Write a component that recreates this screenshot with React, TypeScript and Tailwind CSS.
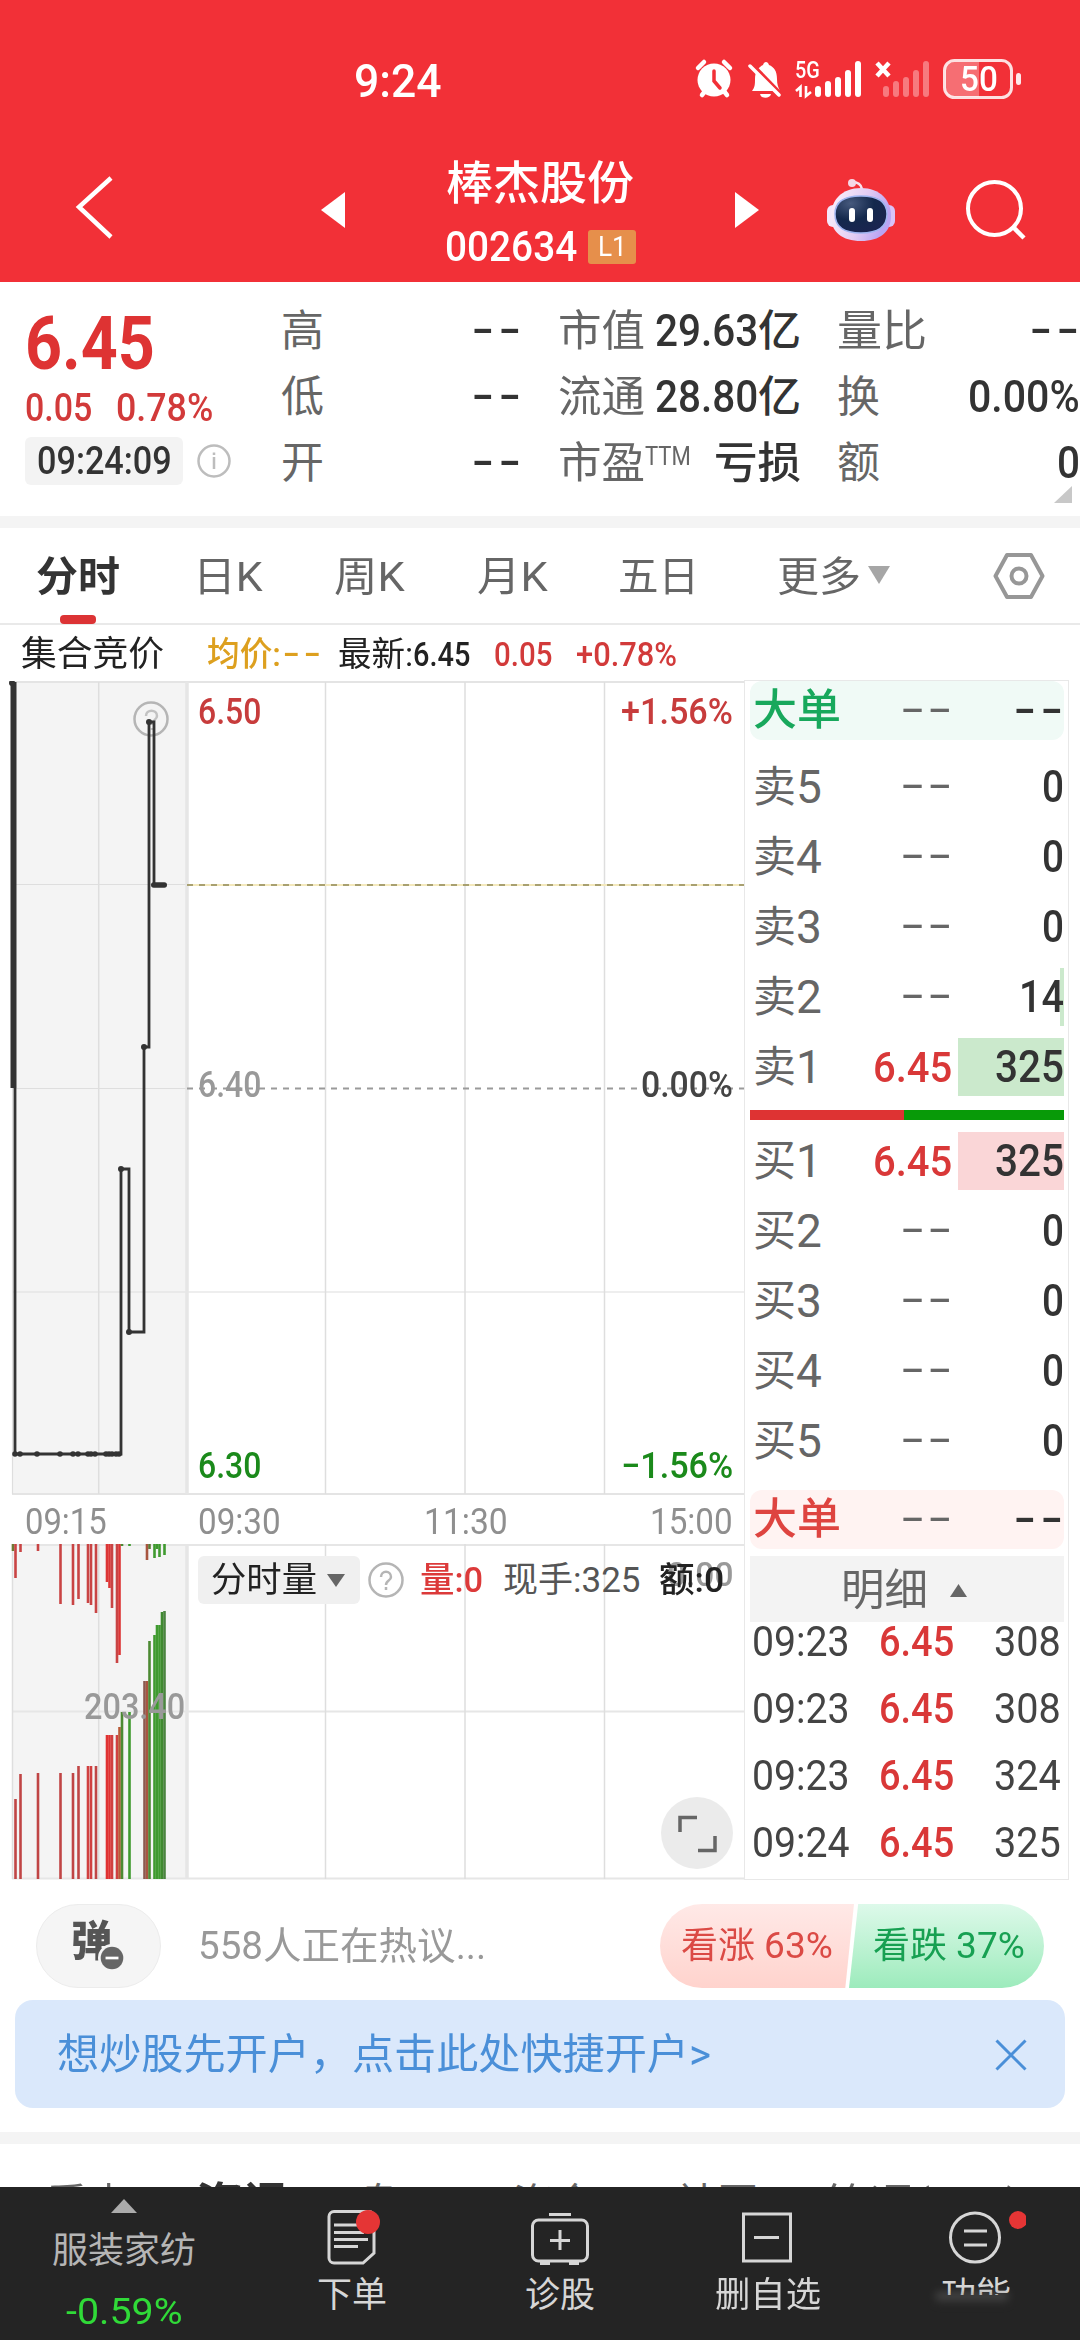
import { useLayoutEffect, useRef, type ReactNode } from "react";

/** Condensed label: the text is squeezed or stretched to the width its class sets. */
function Fit({ className = "", children }: { className?: string; children: ReactNode }) {
  const outer = useRef<HTMLSpanElement>(null);
  const inner = useRef<HTMLSpanElement>(null);
  useLayoutEffect(() => {
    const apply = () => {
      if (!outer.current || !inner.current) return;
      const natural = inner.current.offsetWidth;
      if (natural > 0) inner.current.style.transform = `scaleX(${outer.current.clientWidth / natural})`;
    };
    apply();
    document.fonts?.ready.then(apply);
  }, []);
  return (
    <span ref={outer} className={`block shrink-0 leading-none ${className}`}>
      <span ref={inner} className="inline-block origin-left whitespace-nowrap leading-none">
        {children}
      </span>
    </span>
  );
}

function Dashes({ className = "" }: { className?: string }) {
  return <Fit className={`w-[54px] text-[44px] font-medium tracking-[3.5px] ${className}`}>--</Fit>;
}

function StatusIcons() {
  return (
    <svg className="block" width="340" height="44" viewBox="688 57 340 44" fill="none">
      <circle cx="714" cy="80" r="16.5" fill="#fff" />
      <path d="M698 68l6-6M730 68l-6-6M702 95l4-5M727 95l-4-5" stroke="#fff" strokeWidth="4.5" strokeLinecap="round" />
      <path d="M714 71v10l6 7" stroke="#F23037" strokeWidth="3.5" strokeLinecap="round" />
      <path d="M752 91c3-4 3-7 3-12 0-8 4-12 8-14 1-4 5-4 6 0 5 2 8 6 8 14 0 5 1 8 3 12z" fill="#fff" />
      <path d="M760 94h11c-1 5-10 5-11 0z" fill="#fff" />
      <path d="M753 65l31 32" stroke="#F23037" strokeWidth="3.5" />
      <path d="M750 66l29 29" stroke="#fff" strokeWidth="3.5" strokeLinecap="round" />
      <path d="M796 91l4.500-4v10M806 86v10l5-4" stroke="#fff" strokeWidth="2.600" />
      <g fill="#fff">
        <rect x="815" y="86" width="6" height="11" rx="3" />
        <rect x="825" y="81" width="6" height="16" rx="3" />
        <rect x="835" y="77" width="6" height="20" rx="3" />
        <rect x="845" y="70" width="6" height="27" rx="3" />
        <rect x="855" y="61" width="6" height="36" rx="3" />
      </g>
      <path d="M877 63l12 13M889 63l-12 13" stroke="#fff" strokeWidth="4.500" />
      <g fill="#fff" fillOpacity=".36">
        <rect x="883" y="86" width="6" height="11" rx="3" />
        <rect x="893" y="81" width="6" height="16" rx="3" />
        <rect x="903" y="77" width="6" height="20" rx="3" />
        <rect x="913" y="70" width="6" height="27" rx="3" />
        <rect x="923" y="61" width="6" height="36" rx="3" />
      </g>
      <path d="M979 62v35h-25c-6 0-9-3-9-9V71c0-6 3-9 9-9z" fill="#fff" fillOpacity=".3" />
      <rect x="944.500" y="60.500" width="67" height="37" rx="10" stroke="#fff" strokeOpacity=".85" strokeWidth="3" />
      <rect x="1016" y="73" width="5" height="12" rx="2.500" fill="#fff" fillOpacity=".9" />
    </svg>
  );
}

function Robot() {
  return (
    <svg className="block" width="70" height="66" viewBox="0 0 70 66">
      <defs>
        <linearGradient id="shell" x1="0" y1="0" x2="1" y2=".3">
          <stop offset="0" stopColor="#fdf3fb" />
          <stop offset=".6" stopColor="#e3ccf3" />
          <stop offset="1" stopColor="#b9a4f3" />
        </linearGradient>
        <radialGradient id="visor" cx=".3" cy=".2" r=".9">
          <stop offset="0" stopColor="#46597d" />
          <stop offset=".5" stopColor="#14284c" />
          <stop offset="1" stopColor="#1b2350" />
        </radialGradient>
      </defs>
      <path d="M26 5c6 0 9 2 10 7" stroke="#f8e3ee" strokeWidth="2.500" fill="none" />
      <circle cx="26" cy="6" r="4" fill="#f5d7e6" />
      <rect x="1" y="28" width="12" height="22" rx="6" fill="#f4e6fa" />
      <rect x="57" y="28" width="12" height="22" rx="6" fill="#d9c2f8" />
      <path d="M35 11C54 11 65 23 65 39S54 64 35 64 5 55 5 39s11-28 30-28z" fill="url(#shell)" />
      <path d="M35 19C53 19 61 25 61 37S53 56 35 56 9 49 9 37s8-18 26-18z" fill="url(#visor)" stroke="#9fb4f0" strokeWidth="1.500" />
      <rect x="23" y="31" width="6" height="14" rx="3" fill="#fff" />
      <rect x="41" y="31" width="6" height="14" rx="3" fill="#fff" />
    </svg>
  );
}

function Header() {
  return (
    <header className="h-[282px] shrink-0 bg-[#F23037] text-white">
      <div className="flex h-[158px] items-start pt-[57px]">
        <Fit className="ml-[354px] w-[88px] text-[47px] font-medium">9:24</Fit>
        <div className="relative ml-[246px]">
          <StatusIcons />
          <Fit className="absolute left-[107px] top-[2px] w-[25px] text-[23px] font-medium">5G</Fit>
          <Fit className="absolute left-[272px] top-[5px] w-[38px] text-[35px] font-medium">50</Fit>
        </div>
      </div>
      <div className="flex">
        <svg className="ml-[72px] mt-[16px]" width="44" height="68" viewBox="0 0 44 68" fill="none" stroke="#fff" strokeWidth="4.500">
          <path d="M39 4L7 33l32 30" />
        </svg>
        <svg className="ml-[205px] mt-[34px]" width="24" height="36" viewBox="0 0 24 36" fill="#fff">
          <path d="M24 0v36L0 18z" />
        </svg>
        <div className="ml-[101px] w-[192px] pt-[2px]">
          <Fit className="w-[188px] text-[46px] font-medium">棒杰股份</Fit>
          <div className="mt-[20px] flex items-center">
            <Fit className="-ml-px w-[132px] text-[42px] font-medium">002634</Fit>
            <span className="ml-[11px] flex h-[34px] w-[48px] items-center justify-center rounded-[3px] bg-[#E68F4B]">
              <Fit className="w-[29px] text-[28px]">L1</Fit>
            </span>
          </div>
        </div>
        <svg className="ml-[97px] mt-[34px]" width="24" height="36" viewBox="0 0 24 36" fill="#fff">
          <path d="M0 0l24 18L0 36z" />
        </svg>
        <div className="ml-[67px] mt-[19px]">
          <Robot />
        </div>
        <svg className="ml-[69px] mt-[20px]" width="64" height="64" viewBox="0 0 64 64" fill="none" stroke="#fff" strokeWidth="4">
          <circle cx="29.500" cy="30.500" r="26.500" />
          <path d="M48 49l11 11" strokeWidth="4.500" />
        </svg>
      </div>
    </header>
  );
}

function Summary() {
  return (
    <section className="relative flex h-[234px] shrink-0 bg-white text-[#333]">
      <div className="w-[281px] pl-[25px]">
        <Fit className="mt-[24px] w-[130px] text-[75px] font-bold text-[#DE3333]">6.45</Fit>
        <div className="mt-[8px] flex font-medium text-[#D23A3A]">
          <Fit className="w-[67px] text-[38px]">0.05</Fit>
          <Fit className="ml-[24px] w-[97px] text-[38px]">0.78%</Fit>
        </div>
        <div className="mt-[10px] flex items-center">
          <span className="flex h-[48px] w-[158px] items-center rounded-[6px] bg-[#F3F3F3] pl-[12px]">
            <Fit className="w-[135px] text-[38px] font-medium">09:24:09</Fit>
          </span>
          <svg className="ml-[14px]" width="34" height="34" viewBox="0 0 34 34" fill="none" stroke="#bdbdbd" strokeWidth="2.500">
            <circle cx="17" cy="17" r="15.500" />
            <path d="M17 13v12M17 8.500v2.500" />
          </svg>
        </div>
      </div>
      <div className="w-[245px] pt-[16px]">
        {["高", "低", "开"].map((label) => (
          <div key={label} className="flex h-[66px] items-center justify-between">
            <Fit className="w-[43px] text-[43px] text-[#666]">{label}</Fit>
            <Dashes className="pb-1" />
          </div>
        ))}
      </div>
      <div className="ml-[32px] w-[243px] pt-[16px]">
        {[
          ["市值", "29.63"],
          ["流通", "28.80"],
        ].map(([label, value]) => (
          <div key={label} className="flex h-[66px] items-center">
            <Fit className="w-[87px] text-[43px] text-[#666]">{label}</Fit>
            <Fit className="ml-[10px] w-[103px] text-[44px] font-medium">{value}</Fit>
            <Fit className="w-[43px] text-[43px] font-medium">亿</Fit>
          </div>
        ))}
        <div className="flex h-[66px] items-center">
          <Fit className="w-[87px] text-[43px] text-[#666]">市盈</Fit>
          <Fit className="mb-[14px] w-[46px] text-[25px] text-[#666]">TTM</Fit>
          <Fit className="ml-[23px] w-[87px] text-[43px] font-medium">亏损</Fit>
        </div>
      </div>
      <div className="ml-[36px] w-[243px] pt-[16px]">
        <div className="flex h-[66px] items-center justify-between">
          <Fit className="w-[90px] text-[43px] text-[#666]">量比</Fit>
          <Dashes className="-mr-[4px] pb-1" />
        </div>
        <div className="flex h-[66px] items-center justify-between">
          <Fit className="w-[43px] text-[43px] text-[#666]">换</Fit>
          <Fit className="w-[112px] text-[44px] font-medium">0.00%</Fit>
        </div>
        <div className="flex h-[66px] items-center justify-between">
          <Fit className="w-[43px] text-[43px] text-[#666]">额</Fit>
          <Fit className="w-[23px] text-[44px] font-medium">0</Fit>
        </div>
      </div>
      <svg className="absolute right-[8px] top-[204px]" width="18" height="17" viewBox="0 0 18 17" fill="#c8c8c8">
        <path d="M18 0v17H0z" />
      </svg>
    </section>
  );
}

function PeriodTabs() {
  return (
    <nav className="flex h-[97px] shrink-0 border-b-2 border-[#E9E9E9] bg-white pt-[29px] text-[41px] text-[#666]">
      <div className="ml-[36px] w-[84px]">
        <Fit className="w-[84px] font-bold text-[#333]">分时</Fit>
        <div className="ml-[24px] mt-[17px] h-[9px] w-[36px] rounded-[4px] bg-[#DC3335]" />
      </div>
      <Fit className="ml-[73px] w-[70px]">日K</Fit>
      <Fit className="ml-[71px] w-[71px]">周K</Fit>
      <Fit className="ml-[72px] w-[71px]">月K</Fit>
      <Fit className="ml-[70px] w-[81px]">五日</Fit>
      <Fit className="ml-[78px] w-[84px]">更多</Fit>
      <svg className="ml-[7px] mt-[9px]" width="22" height="18" viewBox="0 0 22 18" fill="#a6a6a6">
        <path d="M0 0h22L11 18z" />
      </svg>
      <svg className="ml-[103px] mt-[-6px]" width="52" height="50" viewBox="0 0 52 50" fill="none" stroke="#979797" strokeWidth="4" strokeLinejoin="round">
        <path d="M14 4h24l11.500 21L38 46H14L2.500 25z" />
        <circle cx="26" cy="25" r="7.500" />
      </svg>
    </nav>
  );
}

function QuoteLine() {
  return (
    <div className="flex h-[56px] w-[744px] items-center pt-[2px] text-[34px] font-medium">
      <Fit className="ml-[21px] w-[143px] text-[35px] font-normal text-[#222]">集合竞价</Fit>
      <Fit className="ml-[43px] w-[74px] text-[#DDA01F]">均价:</Fit>
      <Fit className="ml-[2px] w-[42px] pb-[3px] tracking-[3px] text-[#DDA01F]">--</Fit>
      <Fit className="ml-[13px] w-[75px] font-normal text-[#222]">最新:</Fit>
      <Fit className="ml-0 w-[57px] text-[33px] text-[#222]">6.45</Fit>
      <Fit className="ml-[24px] w-[58px] text-[33px] text-[#D23A3A]">0.05</Fit>
      <Fit className="ml-[24px] w-[101px] text-[33px] text-[#D23A3A]">+0.78%</Fit>
    </div>
  );
}

const trades = [15, 20, 37, 60, 73, 78, 88, 91, 95, 106, 109, 112, 116, 119];

function PriceChart() {
  return (
    <div className="relative h-[814px]">
      <svg className="block" width="744" height="814" viewBox="0 681 744 814" fill="none">
        <rect x="12" y="682" width="174" height="812" fill="#F4F4F4" />
        <path d="M12 682H744M12 1494H744" stroke="#E4E4E4" strokeWidth="2" />
        <path d="M12 884.500H186M12 1088.500H186M12 1292H744M12.500 682V1494" stroke="#DEDEDE" strokeWidth="1.200" />
        <path d="M98.700 682V1494M325.500 682V1494M465 682V1494M604.500 682V1494" stroke="#DEDEDE" strokeWidth="1.500" />
        <path d="M187 682V1494" stroke="#E6E6E6" strokeWidth="3.500" />
        <path d="M187 885H744" stroke="#F4E9BD" strokeWidth="2" />
        <path d="M187 885H744" stroke="#A8A070" strokeWidth="2" strokeDasharray="6 6" />
        <path d="M187 1088.500H744" stroke="#9a9a9a" strokeWidth="2" strokeDasharray="6 6" />
        <circle cx="151" cy="719" r="16.500" stroke="#b5b5b5" strokeWidth="2.500" />
        <path d="M146 716c0-7 11-7 11 0 0 4-5 4-5 9M152 728v2" stroke="#c2c2c2" strokeWidth="2.500" />
        <path d="M13.500 682V1088" stroke="#333" strokeWidth="6" />
        <path d="M15 1088V1454H121V1169H129V1332H144V1047H149V722H154V885H166" stroke="#333" strokeWidth="2.800" />
        <g fill="#333">
          {trades.map((x) => (
            <circle key={x} cx={x} cy="1454" r="2.800" />
          ))}
          <circle cx="12" cy="683" r="3" />
          <circle cx="121" cy="1169" r="3" />
          <circle cx="129" cy="1332" r="3" />
          <circle cx="144" cy="1047" r="3" />
          <circle cx="149" cy="722" r="3" />
          <rect x="151" y="882.300" width="16" height="5.400" rx="2.700" />
        </g>
      </svg>
      <div className="absolute inset-y-0 left-[198px] right-[11px] flex flex-col pt-[13px] text-[36px] font-medium">
        <div className="flex justify-between text-[#C73C3C]">
          <Fit className="w-[63px]">6.50</Fit>
          <Fit className="w-[112px]">+1.56%</Fit>
        </div>
        <div className="mt-[337px] flex justify-between text-[#999]">
          <Fit className="w-[63px]">6.40</Fit>
          <Fit className="w-[92px] text-[#444]">0.00%</Fit>
        </div>
        <div className="mt-[345px] flex justify-between text-[#1B8A1B]">
          <Fit className="w-[63px]">6.30</Fit>
          <Fit className="w-[112px]">−1.56%</Fit>
        </div>
      </div>
    </div>
  );
}

const upperBars: [number, number, string][] = [
  [13, 1551, "#6f7a35"], [15.500, 1578, "#C94444"], [20.500, 1552, "#C94444"], [38, 1551, "#C94444"], [60.500, 1604, "#C94444"],
  [73, 1605, "#C94444"], [78.500, 1599, "#C94444"], [88, 1603, "#C94444"], [91, 1605, "#C94444"], [96, 1613, "#C94444"],
  [107, 1582, "#DC3535"], [109.500, 1588, "#DC3535"], [112, 1608, "#C94444"], [117, 1663, "#C94444"], [119.500, 1655, "#DC3535"],
  [122, 1546, "#4c8a33"], [129.500, 1546, "#3f9a2f"], [147, 1560, "#A85540"], [149.500, 1549, "#5c7a35"], [154.500, 1558, "#3f9a2f"],
  [157, 1549, "#3f9a2f"], [159.500, 1557, "#3f9a2f"], [164.500, 1555, "#3f9a2f"],
];

const lowerBars: [number, number, string][] = [
  [15.500, 1799, "#C04545"], [20.500, 1774, "#C04545"], [38, 1773, "#C04545"], [60.500, 1773, "#C04545"], [73, 1773, "#C04545"],
  [78.500, 1766, "#C04545"], [88, 1766, "#D04040"], [91, 1766, "#D04040"], [96, 1766, "#C04545"], [107, 1735, "#E03232"],
  [109.500, 1735, "#E03232"], [112, 1735, "#D04040"], [117, 1735, "#D04040"], [119.500, 1727, "#B85A38"], [122, 1712, "#4c8a33"],
  [129.500, 1712, "#3f9a2f"], [144.500, 1681, "#8a5a50"], [147, 1681, "#A85540"], [149.500, 1641, "#4c8a33"], [154.500, 1635, "#3f9a2f"],
  [157, 1625, "#3f9a2f"], [159.500, 1625, "#3f9a2f"], [162, 1612, "#3f8a30"], [164.500, 1611, "#4b8440"],
];

function VolumeChart() {
  return (
    <div className="relative h-[336px]">
      <svg className="block" width="744" height="336" viewBox="0 1544 744 336" fill="none">
        <rect x="12" y="1544" width="174" height="335" fill="#F4F4F4" />
        <path d="M12 1545H744M12 1711.500H744M12 1878.500H744" stroke="#E6E6E6" strokeWidth="2" />
        <path d="M12.500 1544V1879M98.700 1544V1879M325.500 1544V1879M465 1544V1879M604.500 1544V1879" stroke="#DEDEDE" strokeWidth="1.500" />
        <path d="M187 1544V1879" stroke="#E6E6E6" strokeWidth="3.500" />
        {upperBars.map(([x, y, color]) => (
          <path key={x} d={`M${x} 1544V${y}`} stroke={color} strokeWidth="2.600" />
        ))}
        {lowerBars.map(([x, y, color]) => (
          <path key={x} d={`M${x} ${y}V1879`} stroke={color} strokeWidth="2.600" />
        ))}
      </svg>
      <Fit className="absolute left-[84px] top-[145px] w-[101px] text-[36px] font-medium text-[#999]">203.40</Fit>
      <Fit className="absolute right-[11px] top-[13px] w-[66px] text-[34px] font-medium text-[#999]">0.00</Fit>
      <div className="absolute left-[198px] top-[12px] flex items-center text-[35px] font-medium">
        <span className="flex h-[48px] w-[162px] items-center rounded-[6px] bg-[#F0F0F0]">
          <Fit className="ml-[13px] w-[106px] font-normal text-[#222]">分时量</Fit>
          <svg className="ml-[10px]" width="18" height="13" viewBox="0 0 18 13" fill="#666">
            <path d="M0 0h18L9 13z" />
          </svg>
        </span>
        <svg className="ml-[8px]" width="36" height="36" viewBox="0 0 36 36" fill="none" stroke="#b5b5b5" strokeWidth="2.500">
          <circle cx="18" cy="18" r="16.500" />
          <path d="M13 15c0-7 10-7 10 0 0 4-5 3-5 8M18 25v3" />
        </svg>
        <Fit className="ml-[16px] w-[63px] text-[#DC3A3A]">量:0</Fit>
        <Fit className="ml-[20px] w-[138px] font-normal text-[#555]">现手:325</Fit>
        <Fit className="ml-[18px] w-[65px] text-[#222]">额:0</Fit>
      </div>
      <svg className="absolute right-[11px] top-[253px]" width="72" height="72" viewBox="0 0 72 72" fill="none">
        <circle cx="36" cy="36" r="36" fill="#EBEBEB" />
        <path d="M19 35V20.500h17M54 39V53.500H37" stroke="#666" strokeWidth="3.500" />
      </svg>
    </div>
  );
}

function Charts() {
  return (
    <div className="w-[744px]">
      <QuoteLine />
      <PriceChart />
      <div className="flex h-[49px] pt-[9px] text-[36px] text-[#8f8f8f]">
        <Fit className="ml-[25px] w-[82px]">09:15</Fit>
        <Fit className="ml-[91px] w-[83px]">09:30</Fit>
        <Fit className="ml-[143px] w-[84px]">11:30</Fit>
        <Fit className="ml-[142px] w-[83px]">15:00</Fit>
      </div>
      <VolumeChart />
    </div>
  );
}

function BigOrder({ buy = false }: { buy?: boolean }) {
  return (
    <div className={buy ? "flex h-[59px] items-center rounded-[12px] bg-[#FFF3F2] text-[#DE4440]" : "flex h-[59px] items-center rounded-[12px] bg-[#F0FAF6] text-[#18A85C]"}>
      <Fit className="ml-[3px] w-[88px] text-[43px] font-medium">大单</Fit>
      <Dashes className="ml-[61px] pb-1 font-normal text-[#666]" />
      <Dashes className="ml-[58px] pb-1 text-[#333]" />
    </div>
  );
}

function Level({ label, price, amount }: { label: string; price?: boolean; amount: string }) {
  const side = label[0];
  const hi =
    amount === "325"
      ? side === "卖"
        ? "bg-[#CBE9CC] w-[106px]"
        : "bg-[#FAD6D7] w-[106px]"
      : amount === "14"
        ? "w-[106px] border-r-4 border-[#CBE9CC]"
        : "w-[106px]";
  const amountWidth = amount.length === 3 ? "w-[69px]" : amount.length === 2 ? "w-[45px] -mr-1" : "w-[22px]";
  return (
    <div className="flex h-[70px] items-center">
      <div className="flex w-[208px] items-center justify-between">
        <span className="ml-[3px] flex items-center text-[#666]">
          <Fit className="w-[43px] text-[43px]">{side}</Fit>
          <Fit className="w-[26px] text-[46px]">{label[1]}</Fit>
        </span>
        {price ? (
          <Fit className="mr-[6px] w-[79px] text-[43px] font-medium text-[#D93838]">6.45</Fit>
        ) : (
          <Dashes className="mr-[2px] pb-1 font-normal text-[#666]" />
        )}
      </div>
      <div className={`flex h-[58px] items-center justify-end text-[#333] ${hi}`}>
        <Fit className={`text-[44px] font-medium ${amountWidth}`}>{amount}</Fit>
      </div>
    </div>
  );
}

function OrderBook() {
  return (
    <aside className="mt-[55px] h-[1200px] w-[325px] border border-[#E8E8E8] bg-white pl-[5px]">
      <div className="w-[314px]">
        <BigOrder />
        <div className="mt-[12px]">
          <Level label="卖5" amount="0" />
          <Level label="卖4" amount="0" />
          <Level label="卖3" amount="0" />
          <Level label="卖2" amount="14" />
          <Level label="卖1" price amount="325" />
        </div>
        <div className="mt-[8px] flex h-[10px]">
          <div className="w-[154px] bg-[#DE3333]" />
          <div className="flex-1 bg-[#089A08]" />
        </div>
        <div className="mt-[6px]">
          <Level label="买1" price amount="325" />
          <Level label="买2" amount="0" />
          <Level label="买3" amount="0" />
          <Level label="买4" amount="0" />
          <Level label="买5" amount="0" />
        </div>
        <div className="mt-[14px]">
          <BigOrder buy />
        </div>
        <div className="mt-[7px] flex h-[66px] items-center bg-[#F3F3F3] pt-[2px]">
          <Fit className="ml-[91px] w-[87px] text-[43px] text-[#666]">明细</Fit>
          <svg className="ml-[22px]" width="17" height="13" viewBox="0 0 17 13" fill="#666">
            <path d="M0 13h17L8.500 0z" />
          </svg>
        </div>
        <div className="mt-[-14px]">
          {[
            ["09:23", "308"],
            ["09:23", "308"],
            ["09:23", "324"],
            ["09:24", "325"],
          ].map(([time, amount], i) => (
            <div key={i} className="flex h-[67px] items-center text-[42px]">
              <Fit className="ml-[2px] w-[98px] text-[#444]">{time}</Fit>
              <Fit className="ml-[29px] w-[75px] font-medium text-[#D93838]">6.45</Fit>
              <Fit className="ml-[40px] w-[67px] text-[#444]">{amount}</Fit>
            </div>
          ))}
        </div>
      </div>
    </aside>
  );
}

function Discussion() {
  return (
    <section className="flex h-[122px] shrink-0 items-start pt-[26px]">
      <div className="relative ml-[36px] flex h-[84px] w-[125px] border-[#ECECEC] rounded-full border bg-[#F5F5F5] pl-[34px] pt-[16px]">
        <Fit className="w-[41px] text-[42px] font-black text-[#555]">弹</Fit>
        <svg className="absolute left-[61px] top-[39px]" width="28" height="28" viewBox="0 0 26 26">
          <circle cx="13" cy="13" r="13" fill="#F5F5F5" />
          <circle cx="13" cy="13" r="10.500" fill="#666" />
          <path d="M7 13h12" stroke="#fff" strokeWidth="2.500" />
        </svg>
      </div>
      <Fit className="ml-[37px] mt-[23px] w-[288px] text-[38px] text-[#999]">558人正在热议...</Fit>
      <div className="ml-[174px] flex h-[84px] w-[384px] overflow-hidden rounded-full text-[36px]">
        <div className="flex w-[194px] items-center bg-linear-to-b from-[#FFE9E7] to-[#FFD3CD] text-[#DB4A45] [clip-path:polygon(0_0,100%_0,95.500%_100%,0_100%)]">
          <Fit className="ml-[21px] w-[152px]">看涨 63%</Fit>
        </div>
        <div className="-ml-[5px] flex flex-1 items-center bg-linear-to-b from-[#DDF9EA] to-[#9CEBBC] text-[#17A052] [clip-path:polygon(4.700%_0,100%_0,100%_100%,0_100%)]">
          <Fit className="ml-[24px] w-[152px]">看跌 37%</Fit>
        </div>
      </div>
    </section>
  );
}

function Banner() {
  return (
    <section className="mx-[15px] flex h-[108px] shrink-0 items-center justify-between rounded-[18px] bg-[#DAE8FB] pl-[42px] pr-[38px] pt-[2px] text-[#4A8FD8]">
      <Fit className="w-[654px] text-[42px]">想炒股先开户，点击此处快捷开户&gt;</Fit>
      <svg width="32" height="32" viewBox="0 0 32 32" stroke="#4A8FD8" strokeWidth="3">
        <path d="M1.500 1.500l29 29M30.500 1.500l-29 29" />
      </svg>
    </section>
  );
}

function BottomBar() {
  return (
    <footer className="flex h-[153px] shrink-0 bg-[#242424] text-[35px] text-[#D6D6D6]">
      <div className="flex w-[248px] flex-col items-center pt-[12px]">
        <svg width="26" height="14" viewBox="0 0 26 14" fill="#ABABAB">
          <path d="M0 14h26L13 0z" />
        </svg>
        <Fit className="mt-[20px] w-[144px] text-[36px] text-[#B5B5B5]">服装家纺</Fit>
        <Fit className="mt-[24px] w-[116px] text-[37px] text-[#30DA38]">-0.59%</Fit>
      </div>
      <div className="flex w-[208px] flex-col items-center pt-[20px]">
        <svg width="60" height="60" viewBox="0 0 60 60" fill="none" stroke="#D6D6D6" strokeWidth="3">
          <path d="M12 4.500h35a5 5 0 0 1 5 5V46L41 56H12a5 5 0 0 1-5-5V9.500a5 5 0 0 1 5-5z" />
          <path d="M12 18h26M12 25.500h30M12 32.500h34M12 39.500h24" />
          <circle cx="46" cy="15" r="12" fill="#E53535" stroke="none" />
        </svg>
        <Fit className="mt-[11px] w-[70px]">下单</Fit>
      </div>
      <div className="flex w-[208px] flex-col items-center pt-[20px]">
        <svg width="60" height="60" viewBox="0 0 60 60" fill="none" stroke="#D6D6D6" strokeWidth="3">
          <rect x="2.500" y="13" width="55" height="41" rx="6" />
          <path d="M19 7.500h22M30 23v20M20 33.500h20" />
          <path d="M10 56h10M39 56h10" strokeWidth="4" />
        </svg>
        <Fit className="mt-[11px] w-[70px]">诊股</Fit>
      </div>
      <div className="flex w-[208px] flex-col items-center pt-[20px]">
        <svg width="60" height="60" viewBox="0 0 60 60" fill="none" stroke="#D6D6D6" strokeWidth="3">
          <rect x="5.500" y="7" width="47" height="47" />
          <path d="M16 30.500h25" />
        </svg>
        <Fit className="mt-[11px] w-[106px]">删自选</Fit>
      </div>
      <div className="relative flex w-[208px] flex-col items-center pt-[20px]">
        <svg width="100" height="60" viewBox="0 0 100 60" fill="none" stroke="#D6D6D6" strokeWidth="3">
          <circle cx="49" cy="30.500" r="24.500" />
          <path d="M38 24h23M38 38h23" />
          <circle cx="92" cy="13" r="9" fill="#E53535" stroke="none" />
        </svg>
        <Fit className="mt-[11px] w-[70px]">功能</Fit>
        <div className="absolute left-0 top-[108px] h-[40px] w-full bg-[#242424]" />
        <div className="absolute left-[64px] top-[106px] h-[10px] w-[72px] bg-linear-to-b from-[#9a9a9a] to-[#242424] opacity-50 blur-[4px]" />
      </div>
    </footer>
  );
}

export default function App() {
  return (
    <main lang="zh-CN" className="flex h-[2340px] w-[1080px] flex-col overflow-hidden bg-white font-['Roboto','Noto_Sans_CJK_SC',sans-serif]">
      <Header />
      <Summary />
      <div className="h-[12px] shrink-0 bg-[#F4F4F4]" />
      <PeriodTabs />
      <div className="flex h-[1253px] shrink-0">
        <Charts />
        <OrderBook />
      </div>
      <Discussion />
      <Banner />
      <div className="mt-[24px] h-[12px] shrink-0 bg-[#F4F4F4]" />
      <div className="flex h-[43px] shrink-0 overflow-hidden pt-[40px] text-[41px] text-[#666]">
        <Fit className="ml-[46px] w-[84px]">看点</Fit>
        <Fit className="ml-[66px] w-[94px] text-[46px] font-bold text-[#333] -mt-[3px]">资讯</Fit>
        <Fit className="ml-[68px] w-[82px]">盘口</Fit>
        <Fit className="ml-[73px] w-[82px]">资金</Fit>
        <Fit className="ml-[81px] w-[82px]">社区</Fit>
        <Fit className="ml-[66px] w-[198px]">简况(F10)</Fit>
      </div>
      <BottomBar />
    </main>
  );
}
